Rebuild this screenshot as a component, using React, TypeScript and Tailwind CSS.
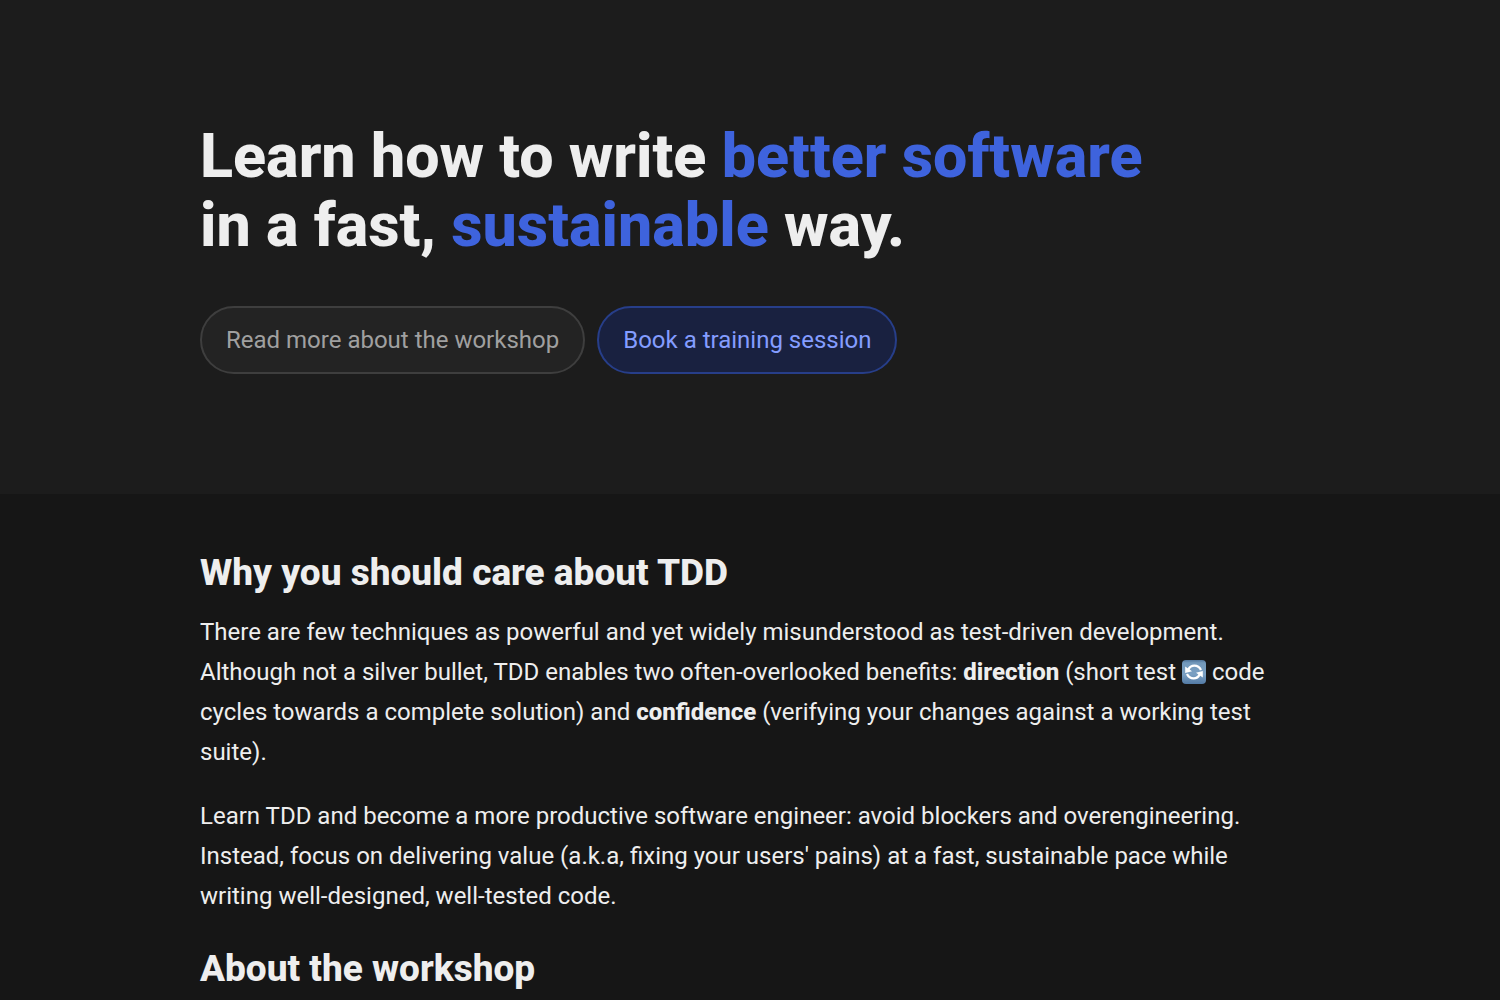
import React from "react";

function CycleIcon() {
  return (
    <svg role="img" aria-label="cycle" viewBox="0 0 24 24" className="inline-block size-6 align-[-4px]">
      <defs>
        <linearGradient id="tile" x1="0" y1="0" x2="0" y2="1">
          <stop offset="0" stopColor="#4f7499" />
          <stop offset="0.12" stopColor="#7399bb" />
          <stop offset="0.6" stopColor="#7ba0c2" />
          <stop offset="1" stopColor="#527aa5" />
        </linearGradient>
      </defs>
      <rect width="24" height="24" rx="4" fill="url(#tile)" />
      <g fill="none" stroke="#fff" strokeWidth="2.3">
        <path d="M6.500 9.500C8.500 4.500 16 4 19 10" />
        <path d="M17.500 14.500C15.500 19.500 8 20 5 14" />
      </g>
      <path d="M3.200 6.500L10 11.200L3.200 13ZM20.800 17.500L14 12.800L20.800 11Z" fill="#fff" />
    </svg>
  );
}

export default function App() {
  return (
    <div className="min-h-screen bg-[#161616] font-['Roboto',sans-serif] text-[#eeeeee]">
      <header className="bg-[#1c1c1c] px-6 pt-[122px] pb-[120px]">
        <div className="mx-auto max-w-[1100px]">
          <h1 className="text-[61px] leading-[69px] font-extrabold">
            Learn how to write <span className="text-[#3e63dd]">better software</span>
            <br />
            in a fast, <span className="text-[#3e63dd]">sustainable</span> way.
          </h1>
          <div className="mt-[46px] flex flex-wrap gap-3 text-[24px] leading-10">
            <a href="#workshop" className="rounded-full border-2 border-[#3e3e3e] bg-[#232323] px-6 py-3 text-[#a0a0a0]">
              Read more about the workshop
            </a>
            <a href="#book" className="rounded-full border-2 border-[#273e89] bg-[#192140] px-6 py-3 text-[#849dff]">
              Book a training session
            </a>
          </div>
        </div>
      </header>
      <main className="mx-auto max-w-[1100px] pt-14 text-[24px] leading-10">
        <h2 className="text-[37px] leading-[46px] font-extrabold">Why you should care about TDD</h2>
        <p className="mt-4">
          There are few techniques as powerful and yet widely misunderstood as test-driven development.
          Although not a silver bullet, TDD enables two often-overlooked benefits: <strong className="font-extrabold">direction</strong> (short test <CycleIcon /> code cycles towards a complete solution) and <strong className="font-extrabold">confidence</strong> (verifying your changes against a working test suite).
        </p>
        <p className="mt-6">
          Learn TDD and become a more productive software engineer: avoid blockers and overengineering.
          Instead, focus on delivering value (a.k.a, fixing your users' pains) at a fast, sustainable pace while
          writing well-designed, well-tested code.
        </p>
        <h2 className="mt-[30px] text-[37px] leading-[46px] font-extrabold">About the workshop</h2>
      </main>
    </div>
  );
}
